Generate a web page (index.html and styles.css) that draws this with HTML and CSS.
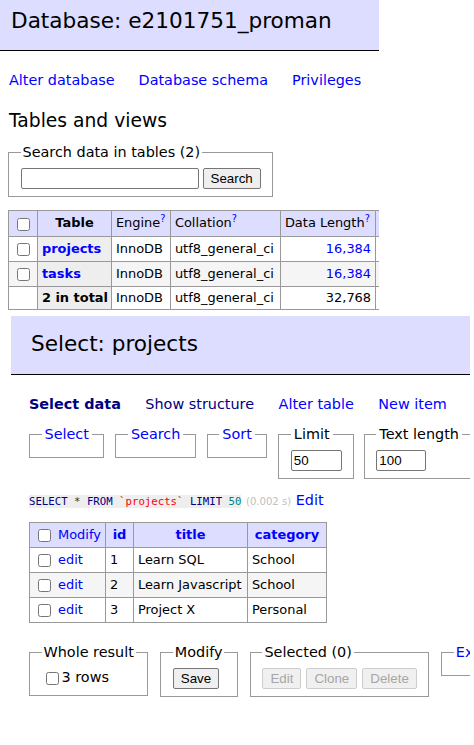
FILE: index.html
```html
<!DOCTYPE html>
<html lang="en">
<head>
<meta charset="utf-8">
<title>Adminer</title>
<link rel="stylesheet" href="styles.css">
</head>
<body>
<div class="shot shot1">
  <h2 class="title t1">Database: e2101751_proman</h2>
  <div class="content c1">
    <p class="links l1"><a href="#">Alter database</a><a href="#">Database schema</a><a href="#">Privileges</a></p>
    <h3 class="sub">Tables and views</h3>
    <fieldset class="fs fs-search">
      <legend>Search data in tables (2)</legend>
      <div class="row"><input class="txt w-search" type="text"><button class="btn" type="button">Search</button></div>
    </fieldset>
    <table class="grid g1">
      <thead>
        <tr class="h26">
          <td class="ck w29"><input type="checkbox"></td>
          <th class="w74">Table</th>
          <td class="w59">Engine<sup><a href="#">?</a></sup></td>
          <td class="w110">Collation<sup><a href="#">?</a></sup></td>
          <td class="w95">Data Length<sup><a href="#">?</a></sup></td>
          <td class="w100"></td>
        </tr>
      </thead>
      <tbody>
        <tr class="h25">
          <td class="ck"><input type="checkbox"></td>
          <th><a href="#">projects</a></th>
          <td>InnoDB</td>
          <td>utf8_general_ci</td>
          <td class="num"><a href="#">16,384</a></td>
          <td></td>
        </tr>
        <tr class="h25 odd">
          <td class="ck"><input type="checkbox"></td>
          <th><a href="#">tasks</a></th>
          <td>InnoDB</td>
          <td>utf8_general_ci</td>
          <td class="num"><a href="#">16,384</a></td>
          <td></td>
        </tr>
        <tr class="h23">
          <td></td>
          <th>2 in total</th>
          <td>InnoDB</td>
          <td>utf8_general_ci</td>
          <td class="num">32,768</td>
          <td></td>
        </tr>
      </tbody>
    </table>
  </div>
</div>

<div class="shot shot2">
  <h2 class="title t2">Select: projects</h2>
  <div class="content c2">
    <p class="links l2"><a href="#" class="vis cur">Select data</a><a href="#" class="vis">Show structure</a><a href="#">Alter table</a><a href="#">New item</a></p>
    <div class="fsrow top-row">
      <fieldset class="fs wide-legend"><legend><a href="#">Select</a></legend></fieldset>
      <fieldset class="fs wide-legend"><legend><a href="#">Search</a></legend></fieldset>
      <fieldset class="fs wide-legend"><legend><a href="#">Sort</a></legend></fieldset>
      <fieldset class="fs wide-legend"><legend>Limit</legend><div class="row"><input class="txt w-limit" type="text" value="50"></div></fieldset>
      <fieldset class="fs wide-legend fs-len"><legend>Text length</legend><div class="row"><input class="txt w-len" type="text" value="100"></div></fieldset>
    </div>
    <p class="sql"><code class="jush"><span class="kw">SELECT</span> <span class="op">*</span> <span class="kw">FROM</span> <span class="bac">`projects`</span> <span class="kw">LIMIT</span> <span class="num">50</span></code> <span class="time">(0.002 s)</span> <a href="#">Edit</a></p>
    <table class="grid g2">
      <thead>
        <tr class="h25">
          <td class="ck top w76"><input type="checkbox"> <a href="#">Modify</a></td>
          <th class="w28"><a href="#">id</a></th>
          <th class="w114"><a href="#">title</a></th>
          <th class="w79"><a href="#">category</a></th>
        </tr>
      </thead>
      <tbody>
        <tr class="h25">
          <td class="ck top"><input type="checkbox"> <a href="#">edit</a></td>
          <td>1</td>
          <td>Learn SQL</td>
          <td>School</td>
        </tr>
        <tr class="h25 odd">
          <td class="ck top"><input type="checkbox"> <a href="#">edit</a></td>
          <td>2</td>
          <td>Learn Javascript</td>
          <td>School</td>
        </tr>
        <tr class="h25">
          <td class="ck top"><input type="checkbox"> <a href="#">edit</a></td>
          <td>3</td>
          <td>Project X</td>
          <td>Personal</td>
        </tr>
      </tbody>
    </table>
    <div class="fsrow bottom-row">
      <fieldset class="fs"><legend>Whole result</legend><label class="cklabel"><input type="checkbox">3 rows</label></fieldset>
      <fieldset class="fs fs-mod"><legend>Modify</legend><div class="row"><button class="btn" type="button">Save</button></div></fieldset>
      <fieldset class="fs"><legend>Selected (0)</legend><div class="row gap5"><button class="btn" type="button" disabled>Edit</button><button class="btn" type="button" disabled>Clone</button><button class="btn" type="button" disabled>Delete</button></div></fieldset>
      <fieldset class="fs"><legend><a href="#">Export</a></legend></fieldset>
    </div>
  </div>
</div>
</body>
</html>
```

FILE: styles.css
```css
html, body {
  margin: 0;
  padding: 0;
  background: #fff;
}

body {
  font-family: "DejaVu Sans", Verdana, sans-serif;
  font-size: 14.4px;
  line-height: 18px;
  color: #000;
}

a {
  color: #00f;
  text-decoration: none;
}

a.vis {
  color: #000080;
}

a.cur {
  font-weight: bold;
}

.shot {
  overflow: hidden;
}

.shot1 {
  width: 379px;
}

.shot2 {
  width: 459px;
  margin: 6px 0 0 11px;
}

.title {
  margin: 0;
  background: #ddf;
  border-bottom: 1px solid #000;
  font-size: 21.6px;
  line-height: 27px;
  font-weight: normal;
  white-space: nowrap;
}

.t1 {
  padding: 7px 11px 16px;
}

.t2 {
  padding: 14px 20px 17px;
}

.c1 {
  padding-left: 8px;
}

.c2 {
  padding-left: 18px;
}

.links {
  display: flex;
  margin: 20px 0 0;
  white-space: nowrap;
}

.l1 {
  gap: 24px;
  margin-left: 1px;
}

.l2 {
  gap: 24.5px;
}

.sub {
  margin: 20px 0 0 1px;
  font-size: 18.72px;
  line-height: 23px;
  font-weight: normal;
}

.fs {
  margin: 0;
  padding: 7px 11.5px;
  border: 1px solid #999;
  flex-shrink: 0;
  min-width: 0;
  width: fit-content;
  white-space: nowrap;
}

.fs legend {
  padding: 0 2px;
  line-height: 18px;
}

.wide-legend legend {
  padding: 0 3px;
}

.fs-len {
  margin-left: -1.5px;
}

.fs-search {
  margin-top: 11px;
}

.fs-mod {
  padding-right: 12.5px;
}

.row {
  display: flex;
  align-items: center;
  gap: 4px;
}

.gap5 {
  gap: 5px;
}

.txt {
  box-sizing: border-box;
  height: 21px;
  margin: 0;
  padding: 1px 2px;
  border: 1px solid #767676;
  border-radius: 2px;
  background: #fff;
  color: #000;
  font-family: "Liberation Sans", Arial, sans-serif;
  font-size: 13.33px;
}

.w-search {
  width: 178px;
}

.w-limit {
  width: 51px;
}

.w-len {
  width: 50px;
}

.btn {
  box-sizing: border-box;
  height: 21px;
  margin: 0;
  padding: 0 7px;
  border: 1px solid #767676;
  border-radius: 2px;
  background: #efefef;
  color: #000;
  font-family: "Liberation Sans", Arial, sans-serif;
  font-size: 13.33px;
  line-height: 15px;
}

.btn:disabled {
  background: #f0f0f0;
  border-color: #cdcdcd;
  color: #a6a6a6;
}

input[type="checkbox"] {
  width: 13px;
  height: 13px;
  margin: 3px 3px 3px 4px;
  vertical-align: middle;
}

.cklabel {
  white-space: nowrap;
}

.grid {
  box-sizing: border-box;
  border-collapse: separate;
  border-spacing: 0;
  border-top: 1px solid #999;
  border-left: 1px solid #999;
  font-size: 12.96px;
  line-height: 16.2px;
  table-layout: fixed;
  margin-top: 13px;
}

.g1 {
  width: 468px;
}

.g2 {
  width: 298px;
}

.grid td,
.grid th {
  box-sizing: border-box;
  border-right: 1px solid #999;
  border-bottom: 1px solid #999;
  padding: 2.6px 3.9px;
  white-space: nowrap;
  overflow: visible;
}

.grid .ck {
  padding-bottom: 1px;
}

.grid th {
  background: #eee;
  text-align: left;
  font-weight: bold;
}

.grid thead td,
.grid thead th {
  background: #ddf;
}

.grid thead th {
  text-align: center;
  padding: 2.6px 6.5px;
}

.grid tr.odd td {
  background: #f5f5f5;
}

.grid .num {
  text-align: right;
}

.grid .top {
  vertical-align: top;
  padding-bottom: 0;
}

.h26 { height: 26px; }
.h25 { height: 25px; }
.h23 { height: 23px; }

.w29 { width: 29px; }
.w74 { width: 74px; }
.w59 { width: 59px; }
.w110 { width: 110px; }
.w95 { width: 95px; }
.w100 { width: 100px; }
.w76 { width: 76px; }
.w28 { width: 28px; }
.w114 { width: 114px; }
.w79 { width: 79px; }

sup {
  font-size: 75%;
  line-height: 0;
  vertical-align: super;
}

.fsrow {
  display: flex;
  align-items: flex-start;
}

.top-row {
  gap: 11px;
  margin-top: 12px;
}

.bottom-row {
  gap: 12px;
  margin-top: 20px;
}

.sql {
  margin: 12px 0 0;
  white-space: nowrap;
}

.jush {
  font-family: "DejaVu Sans Mono", "Liberation Mono", monospace;
  font-size: 10.7px;
  line-height: 1;
  background: #eee;
}

.jush .kw {
  color: #000080;
}

.jush .op {
  color: #333;
}

.jush .bac {
  color: #f00;
}

.jush .num {
  color: #007f7f;
}

.time {
  color: #c0c0c0;
  font-size: 10.08px;
  line-height: 1;
}
```
